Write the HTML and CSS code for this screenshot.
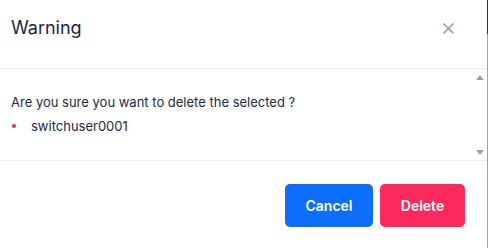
FILE: index.html
```html
<!DOCTYPE html>
<html>
<head>
<meta charset="utf-8">
<link rel="stylesheet" href="styles.css">
</head>
<body>
<div class="frame">
  <div class="modal">
    <div class="modal-header">
      <h5 class="modal-title">Warning</h5>
      <button class="close" aria-label="Close">
        <svg width="11" height="11" viewBox="0 0 11 11"><path d="M0.5 0.5 L10.5 10.5 M10.5 0.5 L0.5 10.5" stroke="#9ea3ba" stroke-width="1.6" fill="none"/></svg>
      </button>
    </div>
    <div class="modal-body">
      <div class="content">
        <p class="question">Are you sure you want to delete the selected ?</p>
        <ul class="items">
          <li>switchuser0001</li>
        </ul>
      </div>
      <div class="scrollbar">
        <span class="arrow up"></span>
        <span class="arrow down"></span>
      </div>
    </div>
    <div class="modal-footer">
      <button class="btn btn-primary">Cancel</button>
      <button class="btn btn-danger">Delete</button>
    </div>
  </div>
  <div class="edge"></div>
</div>
</body>
</html>
```

FILE: styles.css
```css
html, body {
  margin: 0;
  padding: 0;
  background: #ffffff;
}
body {
  font-family: Inter, "Noto Sans", sans-serif;
  color: #1f2944;
}
.frame {
  display: flex;
  width: 489px;
  height: 248px;
}
.modal {
  position: relative;
  width: 487px;
  height: 248px;
  border-right: 1px solid #a3a3a3;
  display: flex;
  flex-direction: column;
  background: #fff;
}
.modal::after {
  content: "";
  position: absolute;
  right: -1px;
  top: 0;
  width: 1px;
  height: 34px;
  background: #2a2f6a;
}
.edge {
  width: 1px;
  height: 248px;
  background: #ffffff;
}
.modal-header {
  height: 69px;
  box-sizing: border-box;
  border-bottom: 1px solid #e9ebef;
  display: flex;
  align-items: center;
  justify-content: space-between;
  padding: 0 33px 0 11px;
}
.modal-title {
  margin: 0;
  font-size: 18px;
  font-weight: 400;
  color: #1c2544;
  line-height: 22px;
  padding-bottom: 12px;
}
.close {
  border: 0;
  background: transparent;
  padding: 0;
  width: 11px;
  height: 11px;
  display: flex;
  margin-bottom: 12px;
}
.modal-body {
  height: 92px;
  box-sizing: border-box;
  border-bottom: 1px solid #e9ebef;
  display: flex;
}
.content {
  flex: 1;
  padding: 24px 11px 0 11px;
}
.question {
  margin: 0;
  font-size: 13px;
  line-height: 18px;
  color: #212a45;
}
.items {
  list-style: none;
  margin: 6px 0 0 0;
  padding: 0;
}
.items li {
  font-size: 13px;
  line-height: 18px;
  color: #212a45;
  padding-left: 20px;
  position: relative;
}
.items li::before {
  content: "";
  position: absolute;
  left: 1px;
  top: 7px;
  width: 4px;
  height: 4px;
  border-radius: 50%;
  background: #f3255a;
}
.scrollbar {
  width: 15px;
  display: flex;
  flex-direction: column;
  justify-content: space-between;
  align-items: center;
  padding: 6px 0 5px 0;
}
.arrow {
  width: 0;
  height: 0;
  border-left: 4.5px solid transparent;
  border-right: 4.5px solid transparent;
}
.arrow.up {
  border-bottom: 5px solid #a3a3a3;
}
.arrow.down {
  border-top: 5px solid #a3a3a3;
}
.modal-footer {
  flex: 1;
  display: flex;
  justify-content: flex-end;
  align-items: flex-start;
  gap: 7px;
  padding: 23px 22px 0 0;
}
.btn {
  border: 0;
  border-radius: 5px;
  height: 43px;
  font-family: Inter, "Noto Sans", sans-serif;
  font-size: 14px;
  font-weight: 600;
  color: #fff;
  padding: 0;
}
.btn-primary {
  width: 88px;
  background: #0e6efc;
}
.btn-danger {
  width: 85px;
  background: #fd295c;
}
```
